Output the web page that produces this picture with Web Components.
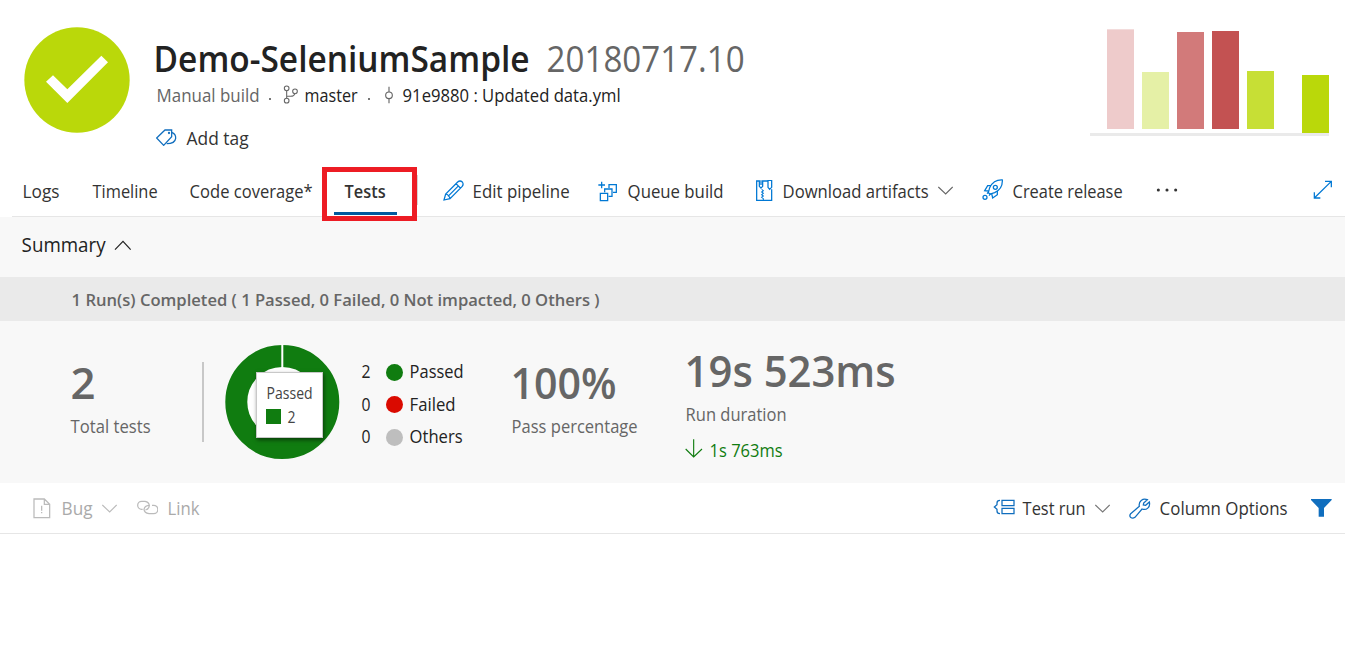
<!DOCTYPE html>
<html lang="en">
<head>
<meta charset="utf-8">
<title>Demo-SeleniumSample</title>
<style>
html,body{margin:0;background:#fff;overflow:hidden}
body{font-family:"Open Sans","Noto Sans",sans-serif;font-size:18px;line-height:24px;color:#333}
</style>
</head>
<body>
<build-page></build-page>
<script>
const ICONS = {
  success:[106,106,'72 53 318 318','<circle cx="231" cy="212" r="158" fill="#bad80a"/><path d="M138 217L159 198L202 240L304 139L324 159L202 281Z" fill="#fff"/>'],
  branch:[16,20,'850 226 48 60','<g stroke-width="3.2"><circle cx="861" cy="236" r="7"/><circle cx="886" cy="245" r="7"/><circle cx="861" cy="273" r="7"/><path d="M861 243V266M861 260H873Q884 260 885 252"/></g>'],
  commit:[10,18,'1153 226 30 54','<g stroke-width="3.4"><circle cx="1168" cy="254" r="10"/><path d="M1168 228V244M1168 264V278"/></g>'],
  tag:[21,17,'468 359 63 51','<path d="M470 386L495 362H515V382L491 408Z"/><path d="M515 369Q528 374 527 387Q525 403 500 403"/><circle cx="507" cy="371" r="1.5"/>'],
  edit:[21,21,'38 43 63 63','<path d="M41 103L46 85L82 49Q89 43 96 49Q101 56 95 63L59 99ZM77 54L90 67M46 85Q56 87 59 99M53 92L85 60"/>'],
  queue:[19,21,'505 47 57 63','<path d="M506 59H526M516 49V69M512 84H534V106H512ZM525 81V71H547V93H537M538 68V58H560V81H550"/>'],
  zip:[17,21,'48 45 51 63','<path d="M58 48H50V106H95V73M68 48H84M58 46V64L63 69L68 64V46M84 46V67L89 73L95 67V46ZM63 46V60"/><path d="M65 73L70 77L65 81L70 85L65 89L70 93L65 97L70 101V106" stroke-width="3.2"/>'],
  chevron:[15,9,'594 63 45 27','<path d="M595 66L617 87L638 66" stroke-width="3.4"/>'],
  up:[18,11,'342 242 54 33','<path d="M345 271L369 246L392 271" stroke-width="3.6"/>'],
  rocket:[22,21,'727 43 66 63','<path d="M788 46C769 45 757 55 750 69L746 84L751 88L765 84C781 76 789 65 788 46Z"/><circle cx="767" cy="68" r="6"/><path d="M754 63H744L735 78L747 79M773 79L773 90L759 100L756 87M747 82L742 87M753 87L748 93"/><circle cx="736" cy="98" r="6"/>'],
  dots:[22,4,'318 70 66 12','<g fill="currentColor" stroke="none"><circle cx="325" cy="76" r="4.6"/><circle cx="351" cy="76" r="4.6"/><circle cx="377" cy="76" r="4.6"/></g>'],
  expand:[19,19,'790 46 57 57','<path d="M794 100L845 50M826 50H845V68M794 83V100H812"/>'],
  doc:[18,21,'98 53 54 63','<path d="M101 56H132L148 72V112H101ZM132 56V72H148M124 76V91M124 95V99"/>'],
  link:[21,15,'410 61 63 45','<path d="M427 89H424A12 12 0 0 1 424 65H434Q446 67 447 78Q446 89 435 91M455 77H460A12 12 0 0 1 460 102H446Q432 100 431 89Q433 78 446 77"/>'],
  group:[22,16,'37 59 66 48','<path d="M58 63Q49 63 49 71V76L41 83L49 90V95Q49 103 58 103M64 63H100V79H64ZM64 87H100V103H64Z"/>'],
  wrench:[22,21,'449 52 66 63','<path d="M454 99L480 77C477 62 490 52 504 57L493 67L492 73L499 74L510 64C514 80 501 90 488 85L467 110C458 116 447 109 454 99Z"/>'],
  filter:[21,18,'994 57 63 54','<path d="M994 57H1056V60L1033 84V110H1017V84L994 60Z" fill="currentColor" stroke="none"/>'],
  down:[18,19,'586 326 54 57','<path d="M612 327V379M588 356L612 380L637 356" stroke-width="3.4"/>'],
  donut:[116,116,'0 0 116 116','<circle cx="58.3" cy="58" r="40" fill="#fff" stroke="none"/><circle cx="58.3" cy="58" r="46" stroke="#107c10" stroke-width="22"/><path d="M58.3 0V24" stroke="#fff" stroke-width="2"/>']
};
customElements.define('ui-icon', class extends HTMLElement{
  connectedCallback(){
    const [w,h,vb,body]=ICONS[this.getAttribute('name')];
    this.attachShadow({mode:'open'}).innerHTML=`<style>:host{display:block;flex:none;width:${w}px;height:${h}px}svg{display:block}</style><svg width="${w}" height="${h}" viewBox="${vb}" fill="none" stroke="currentColor" stroke-width="${this.getAttribute('name')==='success'?0:3.8}">${body}</svg>`;
  }
});
/* One line of text, condensed so that it fills the given width. */
customElements.define('ui-text', class extends HTMLElement{
  connectedCallback(){
    this.attachShadow({mode:'open'}).innerHTML='<style>:host{display:block;flex:none;white-space:pre}span{display:inline-block;transform-origin:0 50%}</style><span><slot></slot></span>';
    const w=+this.getAttribute('w'); if(!w) return;
    const s=this.shadowRoot.querySelector('span');
    s.style.transform=`translateX(.6px) scaleX(${(w-1)/s.getBoundingClientRect().width})`;
    this.style.width=w+'px';
  }
});
const define=(name,css,html)=>customElements.define(name,class extends HTMLElement{
  connectedCallback(){this.attachShadow({mode:'open'}).innerHTML=`<style>:host{display:block}*{box-sizing:border-box}${css}</style>${html}`}
});
define('build-history',`
:host{width:239px;height:107px;border-bottom:3px solid #eaeaea;box-sizing:border-box}
.bars{display:flex;height:104px;align-items:flex-end;padding-left:17px;gap:8px}
i{width:27px;flex:none;margin-bottom:4px}`,
`<div class="bars"><i style="height:100px;background:#eecbcb;border-top:1px solid #f3dcdc"></i><i style="height:57px;background:#e5f0a6"></i><i style="height:97px;background:#d27a7a"></i><i style="height:98px;background:#c35252"></i><i style="height:58px;background:#c7df35"></i><i style="height:58px;background:#bad80a;margin:0 0 0 20px"></i></div>`);
define('build-header',`
:host{display:flex;align-items:flex-start;height:167px;box-sizing:border-box;padding:27.4px 16px 0 24.3px}
.info{margin-left:22.7px;flex:1}
.title{display:flex;line-height:44px;font-size:36px;margin-top:9.6px}
.title ui-text:first-child{font-weight:600;color:#222}
.title ui-text:last-child{color:#666;margin-left:16px}
.row{display:flex;align-items:center;height:24px}
.sub{margin:2px 0 0 3px;color:#666}.sub b{font-weight:400;color:#222}
.dot{width:2px;height:2px;background:#777;position:relative;top:4px}
.tag{margin:19px 0 0 3px;color:#333}.tag ui-icon{color:#106ebe}
build-history{margin-top:1.6px}`,
`<ui-icon name="success" style="margin-top:-.3px"></ui-icon><div class="info">
<div class="title"><ui-text w="377">Demo-SeleniumSample</ui-text><ui-text w="199">20180717.10</ui-text></div>
<div class="row sub"><ui-text w="104">Manual build</ui-text><i class="dot" style="margin:0 12px 0 9px"></i><ui-icon name="branch"></ui-icon><ui-text w="54" style="color:#222;margin-left:5px">master</ui-text><i class="dot" style="margin:0 14px 0 10px"></i><ui-icon name="commit"></ui-icon><ui-text w="219" style="color:#222;margin-left:8px">91e9880 : Updated data.yml</ui-text></div>
<div class="row tag"><ui-icon name="tag"></ui-icon><ui-text w="63" style="margin-left:9px">Add tag</ui-text></div>
</div><build-history></build-history>`);
define('build-tabs',`
:host{display:flex;height:50px;align-items:center;position:relative;color:#333}
:host::after{content:"";position:absolute;left:12px;right:0;bottom:0;height:1px;background:#e6e6e6}
.box{width:95px;height:54px;border:5px solid #ed1c24;align-self:flex-start;flex:none;display:flex;flex-direction:column;align-items:flex-start;position:relative;z-index:1}
.box::after{content:"";position:absolute;left:90px;top:3px;width:1px;height:30px;background:#d4d4d4}
:host>ui-text,ui-text{margin-top:-1.5px}
.box ui-text{font-weight:600;margin:7px 0 0 17px}
.box i{width:63px;height:3px;background:#005a9e;margin:9px 0 0 7px}
ui-icon{color:#0078d4}ui-icon.g{color:#666}`,
`<ui-text w="38" style="margin-left:22px">Logs</ui-text><ui-text w="66" style="margin-left:32px">Timeline</ui-text><ui-text w="124" style="margin-left:31px">Code coverage*</ui-text>
<div class="box" style="margin-left:9px"><ui-text w="42">Tests</ui-text><i></i></div>
<ui-icon name="edit" style="margin-left:26px;margin-top:-4px"></ui-icon><ui-text w="98" style="margin-left:8px">Edit pipeline</ui-text>
<ui-icon name="queue" style="margin-left:28px;margin-top:-2px"></ui-icon><ui-text w="97" style="margin-left:10px">Queue build</ui-text>
<ui-icon name="zip" style="margin-left:32px;margin-top:-3px"></ui-icon><ui-text w="147" style="margin-left:9px">Download artifacts</ui-text><ui-icon class="g" name="chevron" style="margin-left:9px;margin-top:-3px"></ui-icon>
<ui-icon name="rocket" style="margin-left:29px;margin-top:-5px"></ui-icon><ui-text w="111" style="margin-left:8px">Create release</ui-text>
<ui-icon name="dots" style="margin-left:33px;margin-top:-4px;color:#333"></ui-icon><ui-icon name="expand" style="margin-left:auto;margin-right:13px;margin-top:-5px"></ui-icon>`);
define('test-donut',`
:host{position:relative;width:116px;height:116px;flex:none}
.tip{position:absolute;left:31.5px;top:28px;width:67px;height:66px;background:#fff;border:1px solid #c8c8c8;box-shadow:1px 2px 4px rgba(0,0,0,.5);padding:8.5px 0 0 9px;font-size:15.4px;color:#444}
.v{display:flex;align-items:center;height:24px}.v i{width:15px;height:15px;background:#107c10;margin:-2px 6px 0 0}`,
`<ui-icon name="donut"></ui-icon><div class="tip"><ui-text w="47">Passed</ui-text><div class="v"><i></i><ui-text w="9">2</ui-text></div></div>`);
define('test-legend',`
:host{width:106px}
div{display:flex;align-items:center;height:24px;margin-bottom:8.6px;color:#222}i{width:17px;height:17px;border-radius:50%;margin:2px 6px 0 15px}`,
`<div><ui-text w="10">2</ui-text><i style="background:#107c10"></i><ui-text w="55">Passed</ui-text></div><div><ui-text w="10">0</ui-text><i style="background:#da0a00"></i><ui-text w="47">Failed</ui-text></div><div><ui-text w="10">0</ui-text><i style="background:#bebebe"></i><ui-text w="54">Others</ui-text></div>`);
define('test-summary',`
:host{background:#f8f8f8;color:#222;height:266px}
.head{height:60px;display:flex;align-items:center;padding:0 0 4px 21px;font-size:20px}
.runs{height:44px;background:#eaeaea;display:flex;align-items:center;padding:2px 0 0 71px;color:#666;font-weight:600;font-size:17px}
.stats{display:flex;height:162px;align-items:flex-start;color:#666}
.big{font-size:43px;line-height:48px;font-weight:600}
.rule{width:2px;height:80px;background:#c8c8c8;margin-top:41px}
.diff{display:flex;align-items:center;color:#107c10;margin-top:12px}`,
`<div class="head"><ui-text w="85">Summary</ui-text><ui-icon name="up" style="margin-left:8px"></ui-icon></div>
<div class="runs"><ui-text w="529">1 Run(s) Completed ( 1 Passed, 0 Failed, 0 Not impacted, 0 Others )</ui-text></div>
<div class="stats"><div style="margin:38px 0 0 70px;width:132px"><ui-text class="big" w="26">2</ui-text><ui-text w="81" style="margin-top:7px">Total tests</ui-text></div><div class="rule"></div>
<test-donut style="margin:23px 0 0 20px"></test-donut><test-legend style="margin:38px 0 0 21px"></test-legend>
<div style="margin:38px 0 0 44px;width:174px"><ui-text class="big" w="107" style="margin-left:-1px">100%</ui-text><ui-text w="127" style="margin-top:7px">Pass percentage</ui-text></div>
<div style="margin-top:26px"><ui-text class="big" w="212" style="margin-left:-1px">19s 523ms</ui-text><ui-text w="102" style="margin-top:7px">Run duration</ui-text><div class="diff"><ui-icon name="down" style="margin-top:-4px"></ui-icon><ui-text w="74" style="margin-left:6px">1s 763ms</ui-text></div></div></div>`);
define('test-toolbar',`
:host{display:flex;height:51px;box-sizing:border-box;align-items:center;border-bottom:1px solid #e6e6e6;color:#333}
.off{color:#aaa}.off ui-icon{color:#bbb}.off,.on{display:flex;align-items:center}.on{margin-left:auto;padding-right:12.6px}.on ui-icon{color:#106ebe}.on ui-icon.g{color:#777}`,
`<div class="off"><ui-icon name="doc" style="margin-left:32.5px"></ui-icon><ui-text w="32" style="margin-left:10.5px">Bug</ui-text><ui-icon name="chevron" style="margin-left:9px"></ui-icon><ui-icon name="link" style="margin-left:20px;margin-top:-1px"></ui-icon><ui-text w="33" style="margin-left:8.5px">Link</ui-text></div>
<div class="on"><ui-icon name="group" style="margin-top:-2px"></ui-icon><ui-text w="64" style="margin-left:7.5px">Test run</ui-text><ui-icon class="g" name="chevron" style="margin-left:9px"></ui-icon><ui-icon name="wrench" style="margin-left:19px"></ui-icon><ui-text w="129" style="margin-left:8px">Column Options</ui-text><ui-icon name="filter" style="margin-left:23px"></ui-icon></div>`);
define('build-page',':host{width:1345px;height:648px}','<build-header></build-header><build-tabs></build-tabs><test-summary></test-summary><test-toolbar></test-toolbar>');
</script>
</body>
</html>
